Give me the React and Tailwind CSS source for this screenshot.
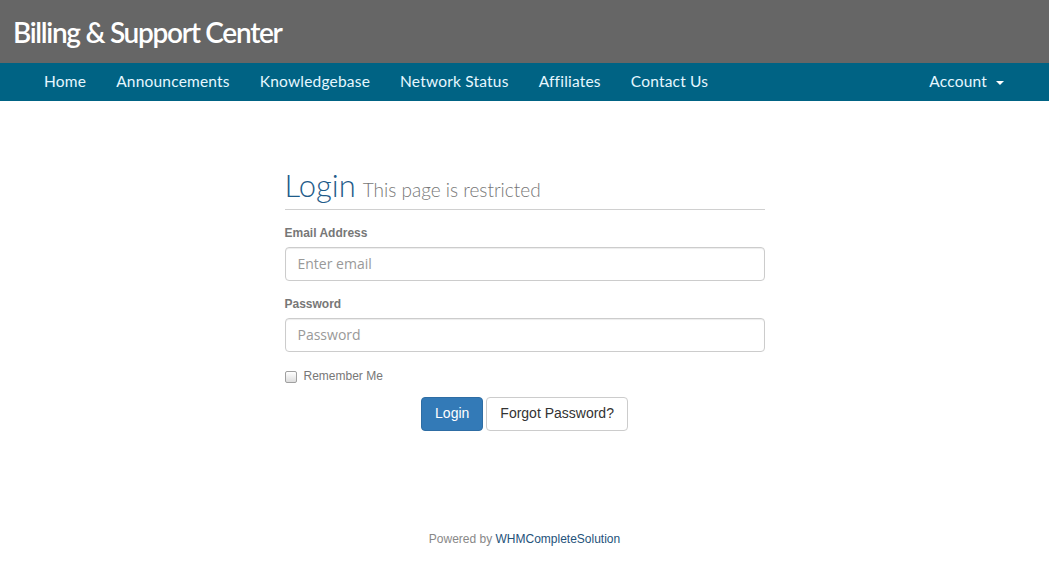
import React from "react";

const navLinks = ["Home", "Announcements", "Knowledgebase", "Network Status", "Affiliates", "Contact Us"];

const App = () => {
  return (
    <div className="min-h-screen bg-white font-['Liberation_Sans',Arial,sans-serif]">
      {/* header */}
      <div className="h-[63px] bg-[#666666] flex items-center px-[13px]">
        <h1 className="text-white text-[28px] font-semibold tracking-[-1.3px] font-['Lato',sans-serif] leading-none">
          Billing &amp; Support Center
        </h1>
      </div>
      <nav className="h-[38px] bg-[#006384] flex items-center pl-[29px] pr-[45px] font-['Lato',sans-serif] text-[15.5px] tracking-[0.2px] text-[#e6f7ff]">
        <div className="flex">
          {navLinks.map((l) => (
            <a key={l} className="px-[15px]">
              {l}
            </a>
          ))}
        </div>
        <a className="ml-auto flex items-center gap-[9px]">
          Account
          <span className="w-0 h-0 border-x-[4px] border-x-transparent border-t-[4px] border-t-white mt-[2px]" />
        </a>
      </nav>

      {/* login */}
      <div className="w-[480px] mx-auto pt-[69px]">
        <div className="border-b border-[#d0d0d0] pb-[4px] flex items-baseline gap-[7px] font-['Lato',sans-serif]">
          <span className="text-[31px] text-[#1f5c8a] font-light leading-none">Login</span>
          <span className="text-[19px] text-[#777777] font-light">This page is restricted</span>
        </div>

        <label className="block mt-[14px] text-[12px] font-bold text-[#777777]">Email Address</label>
        <input
          placeholder="Enter email"
          className="mt-[5px] w-full h-[34px] border border-[#cccccc] rounded-[4px] px-[12px] text-[14px] font-['Open_Sans',sans-serif] placeholder:text-[#999999] outline-none shadow-[inset_0_1px_1px_rgba(0,0,0,0.075)]"
        />

        <label className="block mt-[14px] text-[12px] font-bold text-[#777777]">Password</label>
        <input
          type="password"
          placeholder="Password"
          className="mt-[5px] w-full h-[34px] border border-[#cccccc] rounded-[4px] px-[12px] text-[14px] font-['Open_Sans',sans-serif] placeholder:text-[#999999] outline-none shadow-[inset_0_1px_1px_rgba(0,0,0,0.075)]"
        />

        <div className="mt-[17px] flex items-center gap-[7px]">
          <span className="w-[12px] h-[12px] border border-[#a0a0a0] rounded-[2px] bg-gradient-to-b from-white to-[#dddddd]" />
          <span className="text-[12px] text-[#777777] -mt-[2px]">Remember Me</span>
        </div>

        <div className="mt-[12px] flex justify-center gap-[3px]">
          <button className="h-[34px] px-[13px] bg-[#337ab7] border border-[#2e6da4] rounded-[4px] text-white text-[14px]">
            Login
          </button>
          <button className="h-[34px] px-[13px] bg-white border border-[#cccccc] rounded-[4px] text-[#333333] text-[14px]">
            Forgot Password?
          </button>
        </div>
      </div>

      <div className="mt-[99px] text-center text-[12px] text-[#888888]">
        Powered by <a className="text-[#24527a]">WHMCompleteSolution</a>
      </div>
    </div>
  );
};

export default App;
